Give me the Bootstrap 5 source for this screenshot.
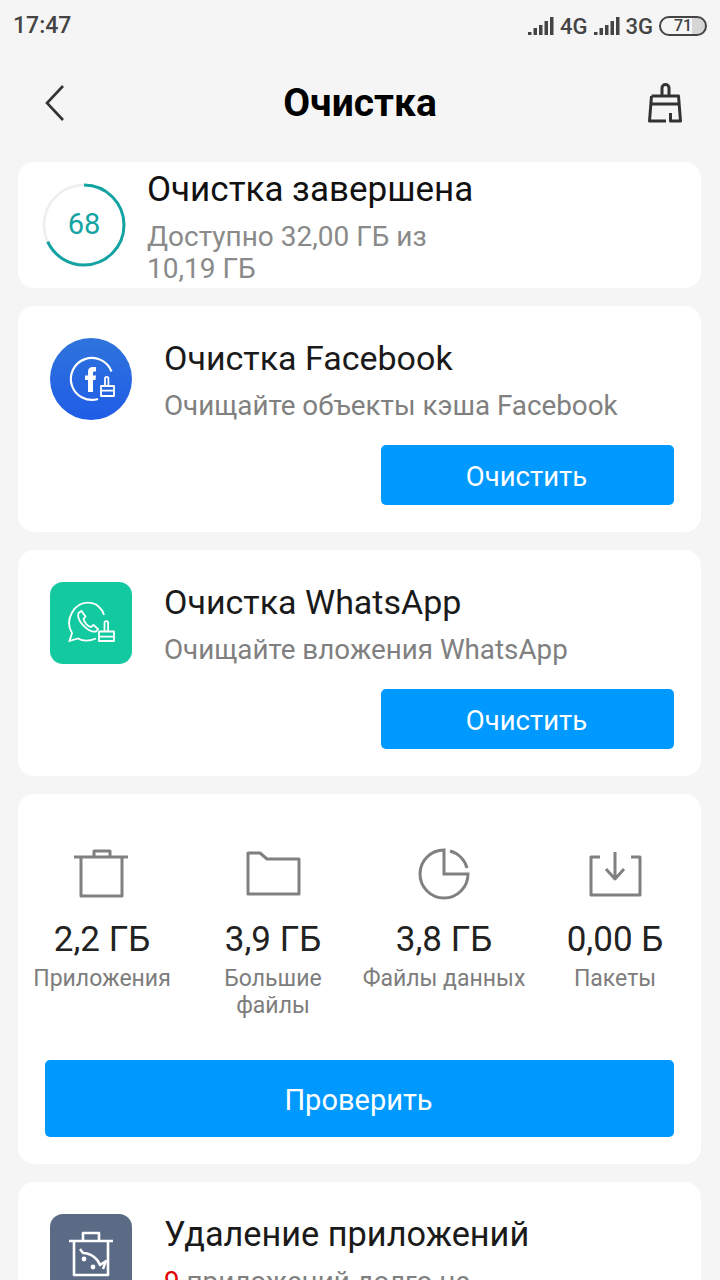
<!DOCTYPE html>
<html lang="ru">
<head>
    <meta charset="UTF-8">
    <meta name="viewport" content="width=device-width, initial-scale=1">
    <title>Очистка</title>
    <link href="https://cdn.jsdelivr.net/npm/bootstrap@5.3.0/dist/css/bootstrap.min.css" rel="stylesheet">
    <style>
        html, body {
            height: 1280px;
            overflow: hidden;
        }
        body {
            background-color: #f5f5f5;
            font-family: Roboto, "Liberation Sans", sans-serif;
            color: #1a1a1a;
        }
        .status-row {
            height: 52px;
            padding: 0 13px;
            color: #444;
            font-weight: 500;
            font-size: 23px;
        }
        .status-net {
            font-size: 22px;
            gap: 6px;
        }
        .batt {
            width: 48px;
            height: 20px;
            border: 2px solid #444;
            border-radius: 10px;
            font-size: 16px;
            line-height: 16px;
            text-align: center;
            background: linear-gradient(90deg, #f5f5f5 0 71%, #d6d6d6 71%);
        }
        .top-row {
            height: 110px;
            padding: 0 36px 8px 42px;
        }
        .top-title {
            font-size: 39px;
            font-weight: 700;
            color: #000;
            line-height: 1;
        }
        .sheet {
            background: #fff;
            border-radius: 16px;
            margin: 0 19px 18px 18px;
        }
        .sheet-done {
            height: 126px;
            padding: 11px 24px 5px;
            gap: 21px;
        }
        .ring-box {
            width: 84px;
            height: 84px;
            flex: none;
            margin-top: -6px;
        }
        .ring-num {
            font-size: 29px;
            color: #13a3a3;
        }
        .done-title {
            font-size: 35px;
            line-height: 38px;
            color: #111;
        }
        .done-sub {
            font-size: 28px;
            line-height: 32px;
            color: #8a8a8a;
            margin-top: 12px;
            width: 300px;
        }
        .sheet-tool {
            height: 226px;
            padding: 32px 27px 27px 32px;
        }
        .tool-ico {
            width: 82px;
            height: 82px;
            flex: none;
            margin-right: 32px;
        }
        .tool-title {
            font-size: 34px;
            line-height: 41px;
            color: #1a1a1a;
        }
        .apps-title {
            font-size: 34.300px;
        }
        .tool-sub {
            font-size: 27.800px;
            line-height: 32px;
            color: #808080;
            margin-top: 11px;
        }
        .tool-narrow {
            width: 400px;
        }
        .btn-row {
            margin-top: 23px;
        }
        .btn-clean, .btn-clean:hover {
            background: #0099ff;
            color: #fff;
            border: 0;
            border-radius: 5px;
            font-size: 27.500px;
        }
        .btn-small {
            width: 293px;
            height: 60px;
            padding: 3px 2px 0 0;
        }
        .btn-wide {
            width: 100%;
            height: 77px;
            padding: 4px 2px 0 0;
            font-size: 29px;
        }
        .sheet-stats {
            height: 370px;
            padding: 52px 27px 27px 0;
        }
        .stat-ico {
            display: block;
            margin: 0 auto 18px;
        }
        .stat-val {
            font-size: 35px;
            line-height: 40px;
            color: #222;
        }
        .stat-label {
            font-size: 23px;
            line-height: 27px;
            color: #7d7d7d;
            margin-top: 5px;
        }
        .stat-cell {
            flex: 0 0 171px;
            width: 171px;
        }
        .stat-wrap {
            height: 214px;
            margin-left: -1.500px;
        }
        .wide-wrap {
            padding-left: 27px;
        }
        .sheet-apps {
            height: 200px;
            padding: 32px 27px 27px 32px;
        }
        .red-num {
            color: #e00000;
        }
    </style>
</head>
<body>
    <div class="status-row d-flex align-items-center justify-content-between">
        <span>17:47</span>
        <div class="status-net d-flex align-items-center">
            <svg width="26" height="18" viewBox="0 0 26 18"><g fill="#444"><rect x="0" y="15" width="3.500" height="3"/><rect x="5.500" y="11" width="3.500" height="7"/><rect x="11" y="8" width="3.500" height="10"/><rect x="16.500" y="4" width="3.500" height="14"/><rect x="22" y="0" width="3.500" height="18"/></g></svg>
            <span>4G</span>
            <svg width="26" height="18" viewBox="0 0 26 18"><g fill="#444"><rect x="0" y="15" width="3.500" height="3"/><rect x="5.500" y="11" width="3.500" height="7"/><rect x="11" y="8" width="3.500" height="10"/><rect x="16.500" y="4" width="3.500" height="14"/><rect x="22" y="0" width="3.500" height="18"/></g></svg>
            <span>3G</span>
            <div class="batt">71</div>
        </div>
    </div>

    <div class="top-row d-flex align-items-center justify-content-between">
        <svg width="30" height="38" viewBox="0 0 30 38"><path d="M21 2 L5 19 L21 36" fill="none" stroke="#333" stroke-width="2.600"/></svg>
        <div class="top-title">Очистка</div>
        <svg width="36" height="40" viewBox="0 0 36 40" fill="none" stroke="#333" stroke-width="3" stroke-linejoin="round"><path d="M14 13 V5 a3.500 3.500 0 0 1 7 0 V13"/><path d="M3.500 13 H30.500 L32.500 38 H22.500 V30"/><path d="M3.500 13 L1.500 38 H18"/><path d="M3 21 H31"/></svg>
    </div>

    <div class="sheet sheet-done d-flex align-items-center">
        <div class="ring-box position-relative d-flex align-items-center justify-content-center">
            <svg class="position-absolute top-0 start-0" width="84" height="84" viewBox="0 0 84 84">
                <circle cx="42" cy="42" r="40" fill="none" stroke="#eeeeee" stroke-width="2.500"/>
                <circle cx="42" cy="42" r="40" fill="none" stroke="#13a3a3" stroke-width="3" stroke-dasharray="171 251" transform="rotate(-90 42 42)"/>
            </svg>
            <span class="ring-num">68</span>
        </div>
        <div>
            <div class="done-title">Очистка завершена</div>
            <div class="done-sub">Доступно 32,00 ГБ из 10,19 ГБ</div>
        </div>
    </div>

    <div class="sheet sheet-tool">
        <div class="d-flex">
            <svg class="tool-ico" viewBox="0 0 82 82">
                <defs><linearGradient id="fbg" x1="0" y1="0" x2="0" y2="1"><stop offset="0" stop-color="#2f74dc"/><stop offset="1" stop-color="#1f5ce6"/></linearGradient></defs>
                <circle cx="41" cy="41" r="41" fill="url(#fbg)"/>
                <path d="M61.500 33.500 A21 21 0 1 0 48 61" fill="none" stroke="#fff" stroke-width="2.200"/>
                <path d="M38 54 V42 H35 V37.500 H38 V34 C38 30.500 40 29 43 29 H46 V33.500 H44 C43 33.500 43 34.500 43 35 V37.500 H46 L45.500 42 H43 V54 Z" fill="#fff"/>
                <path d="M55 48 V40.500 a1.700 1.700 0 0 1 3.400 0 V48 Z M51 48 H64 V58 H51 Z M51 52.700 H64" fill="none" stroke="#fff" stroke-width="1.800" stroke-linejoin="round"/>
            </svg>
            <div>
                <div class="tool-title">Очистка Facebook</div>
                <div class="tool-sub">Очищайте объекты кэша Facebook</div>
            </div>
        </div>
        <div class="btn-row d-flex justify-content-end">
            <button type="button" class="btn btn-clean btn-small">Очистить</button>
        </div>
    </div>

    <div class="sheet sheet-tool">
        <div class="d-flex">
            <svg class="tool-ico" viewBox="0 0 82 82">
                <rect width="82" height="82" rx="13" fill="#12c9a0"/>
                <path d="M46 56.500 C40 59 33 59.500 28 56.500 L19.500 59 L22 51 C14 38 24 20.700 38 20.700 C46 20.700 52 26 54 33" fill="none" stroke="#fff" stroke-width="1.800"/>
                <path d="M28.500 31 L31.500 29 L35.500 34.500 L33.500 37 C34.500 41 38 44.500 41 45 L43.500 43 L48 47 L46 49.500 C39 51 26 39 28.500 31 Z" fill="none" stroke="#fff" stroke-width="1.800"/>
                <path d="M54.500 49.500 V41 a1.800 1.800 0 0 1 3.600 0 V49.500 Z M49 49.500 H64 V59 H49 Z M49 54.700 H64" fill="none" stroke="#fff" stroke-width="1.800" stroke-linejoin="round"/>
            </svg>
            <div>
                <div class="tool-title">Очистка WhatsApp</div>
                <div class="tool-sub">Очищайте вложения WhatsApp</div>
            </div>
        </div>
        <div class="btn-row d-flex justify-content-end">
            <button type="button" class="btn btn-clean btn-small">Очистить</button>
        </div>
    </div>

    <div class="sheet sheet-stats">
        <div class="stat-wrap d-flex text-center">
            <div class="stat-cell">
                <svg class="stat-ico" width="60" height="56" viewBox="0 0 60 56" fill="none" stroke="#808080" stroke-width="3" stroke-linejoin="round"><path d="M2 11 H56"/><path d="M22 10 V5 H38 V10"/><path d="M9 11 V50 H50 V11"/></svg>
                <div class="stat-val">2,2 ГБ</div>
                <div class="stat-label">Приложения</div>
            </div>
            <div class="stat-cell">
                <svg class="stat-ico" width="60" height="56" viewBox="0 0 60 56" fill="none" stroke="#808080" stroke-width="3" stroke-linejoin="round"><path d="M5 7 H17 L24 13 H56 V48 H5 Z"/></svg>
                <div class="stat-val">3,9 ГБ</div>
                <div class="stat-label">Большие файлы</div>
            </div>
            <div class="stat-cell">
                <svg class="stat-ico" width="60" height="56" viewBox="0 0 60 56" fill="none" stroke="#808080" stroke-width="3"><path d="M30 4 A24 24 0 1 0 54 28 H30 Z"/><path d="M36 5 A24 24 0 0 1 53 22"/></svg>
                <div class="stat-val">3,8 ГБ</div>
                <div class="stat-label">Файлы данных</div>
            </div>
            <div class="stat-cell">
                <svg class="stat-ico" width="60" height="56" viewBox="0 0 60 56" fill="none" stroke="#808080" stroke-width="3" stroke-linejoin="round"><path d="M15 11 H6 V49 H55 V11 H46"/><path d="M30 6 V33 M21 23 L30 33 L39 23"/></svg>
                <div class="stat-val">0,00 Б</div>
                <div class="stat-label">Пакеты</div>
            </div>
        </div>
        <div class="wide-wrap">
            <button type="button" class="btn btn-clean btn-wide">Проверить</button>
        </div>
    </div>

    <div class="sheet sheet-apps">
        <div class="d-flex">
            <svg class="tool-ico" viewBox="0 0 82 82">
                <rect width="82" height="82" rx="13" fill="#5b6b85"/>
                <path d="M19 27 H63 M33 26 V19 H49 V26 M24 27 V61 H58 V27" fill="none" stroke="#fff" stroke-width="2.600" stroke-linejoin="round"/>
                <path d="M30 35 L33 39 C41 39 48 45 50 51 L56 47 L53 55" fill="none" stroke="#fff" stroke-width="2.400" stroke-linejoin="round"/>
                <circle cx="34" cy="45" r="2.400" fill="#fff"/><circle cx="43" cy="53" r="2.400" fill="#fff"/>
            </svg>
            <div class="tool-narrow">
                <div class="tool-title apps-title">Удаление приложений</div>
                <div class="tool-sub"><span class="red-num">9</span> приложений долго не используются</div>
            </div>
        </div>
    </div>
    <script src="https://cdn.jsdelivr.net/npm/bootstrap@5.3.0/dist/js/bootstrap.bundle.min.js"></script>
</body>
</html>
